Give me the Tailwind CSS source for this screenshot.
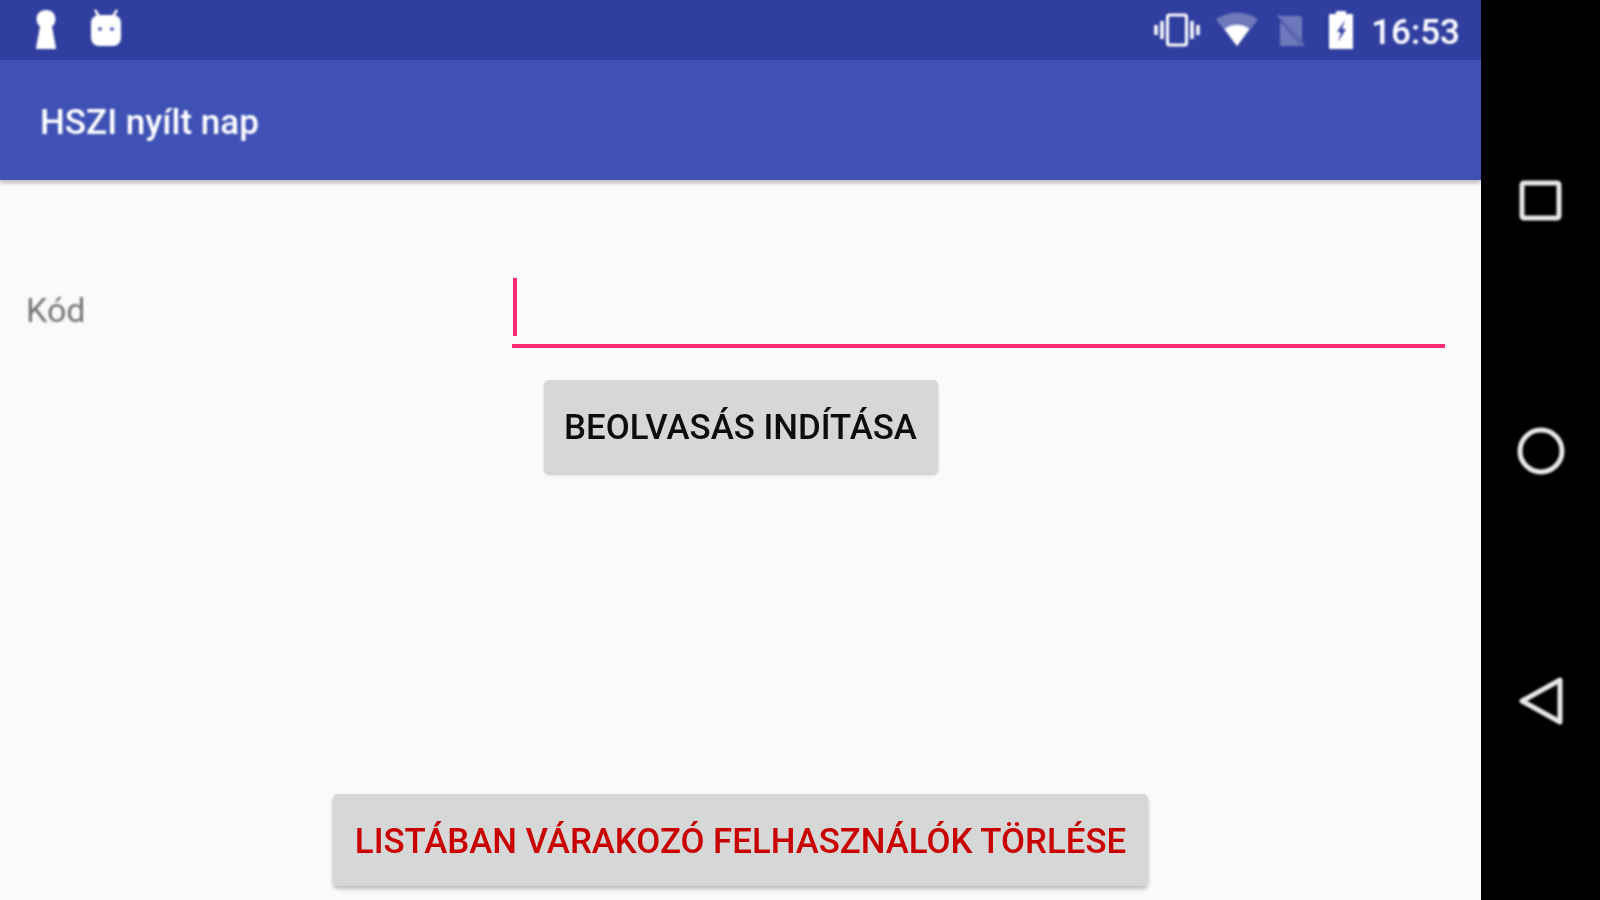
<!DOCTYPE html>
<html>
<head>
<meta charset="utf-8">
<script src="https://cdn.jsdelivr.net/npm/@tailwindcss/browser@4"></script>
</head>
<body class="m-0 overflow-hidden bg-black">
<div class="flex h-[900px] w-[1600px] font-['Roboto',sans-serif]">
  <main class="flex w-[1481px] flex-col bg-[#fafafa]">
    <div class="flex h-[60px] items-center bg-[#303f9f] pl-[30px] pr-[21px] text-white">
      <svg class="h-[44px] w-[32px] -translate-y-[1px] blur-[0.8px]" viewBox="0 0 32 44" fill="#fff"><path d="M16 3c5.800 0 9.500 4 9.500 9 0 3.500-1.800 6-3.500 7.500L26 41c0 .6-.4 1-1 1H7c-.6 0-1-.4-1-1l4-21.500C8.300 18 6.500 15.500 6.500 12c0-5 3.700-9 9.500-9z"/></svg>
      <svg class="ml-[26px] h-[44px] w-[36px] -translate-y-[4px] blur-[0.8px]" viewBox="0 0 36 44"><path d="M7 6l5 8M29 6l-5 8" stroke="#fff" stroke-width="2.500"/><rect x="3" y="11" width="30" height="31" rx="8" fill="#fff"/><circle cx="12" cy="25" r="2" fill="#5563b0"/><circle cx="24" cy="25" r="2" fill="#5563b0"/></svg>
      <div class="ml-auto flex items-center">
        <svg class="h-[36px] w-[50px] blur-[0.8px]" viewBox="0 0 50 36" fill="none" stroke="#fff"><rect x="15.500" y="3" width="19" height="30" rx="2" stroke-width="3"/><path d="M10 9v18M40 9v18" stroke-width="3.500"/><path d="M4 13v10M46 13v10" stroke-width="3.500"/></svg>
        <svg class="ml-[14px] h-[36px] w-[42px] blur-[0.8px]" viewBox="0 0 44 36"><path d="M0 7C6 2.500 14 0 22 0s16 2.500 22 7L22 35z" fill="#fff" fill-opacity=".3"/><path d="M9 17c3.500-3 8-4.500 13-4.500s9.500 1.500 13 4.500L22 35z" fill="#fff"/></svg>
        <svg class="ml-[18px] h-[36px] w-[30px] blur-[0.8px]" viewBox="0 0 30 36"><path d="M4 4h20l2 2v28H4z" fill="#fff" fill-opacity=".3"/><path d="M1 3l28 32" stroke="#303f9f" stroke-width="3.500"/><path d="M2 3l26 31" stroke="#fff" stroke-opacity=".3" stroke-width="2"/></svg>
        <svg class="ml-[22px] h-[40px] w-[26px] blur-[0.8px]" viewBox="0 0 26 40"><path d="M8 1h10v3h6a1 1 0 0 1 1 1v33a1 1 0 0 1-1 1H2a1 1 0 0 1-1-1V5a1 1 0 0 1 1-1h6z" fill="#fff"/><path d="M17 10l-8 12h4l-3 10 8-13h-4z" fill="#303f9f"/></svg>
        <span class="ml-[17px] translate-y-[2px] text-[35px] leading-none font-medium blur-[0.8px]">16:53</span>
      </div>
    </div>
    <header class="z-10 flex h-[120px] items-center bg-[#3f51b5] pl-[40px] shadow-[0_3px_4px_rgba(0,0,0,0.25)]">
      <h1 class="translate-y-[2px] text-[35px] leading-none font-medium text-white blur-[0.8px]">HSZI nyílt nap</h1>
    </header>
    <section class="flex flex-1 flex-col">
      <div class="mt-[98px] flex h-[70px] pr-[36px]">
        <label class="w-[512px] pl-[26px] pt-[12px] text-[34px] leading-[40px] text-[#757575] blur-[0.8px]">Kód</label>
        <div class="flex-1 border-b-[4px] border-[#ff2a70]">
          <div class="ml-[1px] h-[58px] w-[4px] bg-[#ff2a70]"></div>
        </div>
      </div>
      <div class="mt-[32px] flex justify-center">
        <button class="h-[93px] w-[394px] rounded-[5px] bg-[#d6d7d7] pt-[2px] text-[34.8px] font-medium text-[#0d0d0d] shadow-[0_2px_3px_rgba(0,0,0,0.2)] blur-[0.7px]">BEOLVASÁS INDÍTÁSA</button>
      </div>
      <div class="mt-[321px] flex justify-center">
        <button class="h-[92px] w-[815px] rounded-[5px] bg-[#d6d7d7] pt-[2px] text-[34.8px] font-medium text-[#c80000] shadow-[0_3px_4px_rgba(0,0,0,0.25)] blur-[0.7px]">LISTÁBAN VÁRAKOZÓ FELHASZNÁLÓK TÖRLÉSE</button>
      </div>
    </section>
  </main>
  <nav class="flex w-[119px] flex-col items-center bg-black pt-[176px]">
    <svg class="h-[50px] w-[50px] blur-[0.8px]" viewBox="0 0 50 50" fill="none" stroke="#e8e8e8" stroke-width="5"><rect x="6" y="7" width="37" height="35" rx="2"/></svg>
    <svg class="mt-[200px] h-[50px] w-[50px] blur-[0.8px]" viewBox="0 0 50 50" fill="none" stroke="#e8e8e8" stroke-width="5"><circle cx="25" cy="25" r="21"/></svg>
    <svg class="mt-[200px] h-[50px] w-[50px] blur-[0.8px]" viewBox="0 0 50 50" fill="none" stroke="#e8e8e8" stroke-width="5" stroke-linejoin="round"><path d="M44 4v42L6 25z"/></svg>
  </nav>
</div>
</body>
</html>
